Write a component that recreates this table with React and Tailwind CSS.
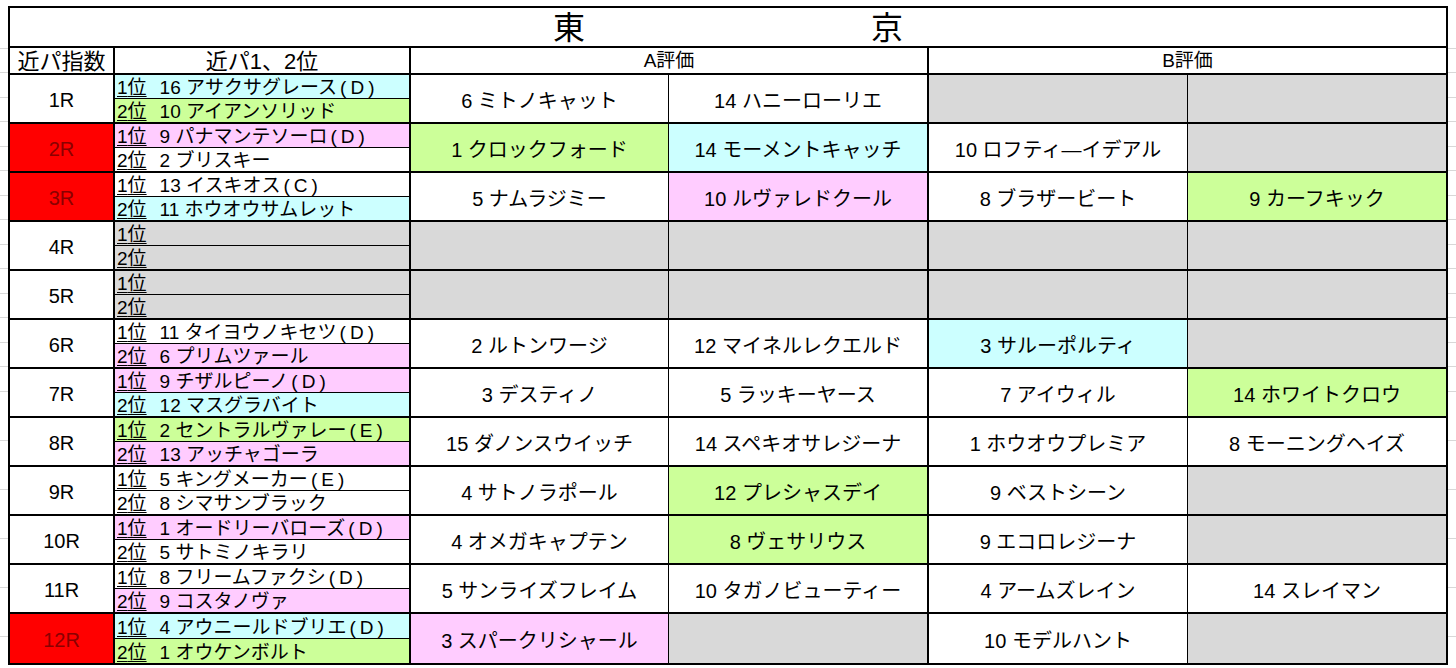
const BG = {
  w: "bg-white",
  c: "bg-[#ccffff]",
  g: "bg-[#ccff99]",
  p: "bg-[#ffccff]",
  x: "bg-[#d9d9d9]",
};

const rows = [
  { r: "1R", red: false, s1: ["c", "16 アサクサグレース", "D"], s2: ["g", "10 アイアンソリッド"], a1: ["w", "6 ミトノキャット"], a2: ["w", "14 ハニーローリエ"], b1: ["x", ""], b2: ["x", ""] },
  { r: "2R", red: true, s1: ["p", "9 パナマンテソーロ", "D"], s2: ["w", "2 ブリスキー"], a1: ["g", "1 クロックフォード"], a2: ["c", "14 モーメントキャッチ"], b1: ["w", "10 ロフティ―イデアル"], b2: ["x", ""] },
  { r: "3R", red: true, s1: ["w", "13 イスキオス", "C"], s2: ["c", "11 ホウオウサムレット"], a1: ["w", "5 ナムラジミー"], a2: ["p", "10 ルヴァレドクール"], b1: ["w", "8 ブラザービート"], b2: ["g", "9 カーフキック"] },
  { r: "4R", red: false, s1: ["x", ""], s2: ["x", ""], a1: ["x", ""], a2: ["x", ""], b1: ["x", ""], b2: ["x", ""] },
  { r: "5R", red: false, s1: ["x", ""], s2: ["x", ""], a1: ["x", ""], a2: ["x", ""], b1: ["x", ""], b2: ["x", ""] },
  { r: "6R", red: false, s1: ["w", "11 タイヨウノキセツ", "D"], s2: ["p", "6 プリムツァール"], a1: ["w", "2 ルトンワージ"], a2: ["w", "12 マイネルレクエルド"], b1: ["c", "3 サルーポルティ"], b2: ["x", ""] },
  { r: "7R", red: false, s1: ["p", "9 チザルピーノ", "D"], s2: ["c", "12 マスグラバイト"], a1: ["w", "3 デスティノ"], a2: ["w", "5 ラッキーヤース"], b1: ["w", "7 アイウィル"], b2: ["g", "14 ホワイトクロウ"] },
  { r: "8R", red: false, s1: ["g", "2 セントラルヴァレー", "E"], s2: ["p", "13 アッチャゴーラ"], a1: ["w", "15 ダノンスウイッチ"], a2: ["w", "14 スペキオサレジーナ"], b1: ["w", "1 ホウオウプレミア"], b2: ["w", "8 モーニングヘイズ"] },
  { r: "9R", red: false, s1: ["w", "5 キングメーカー", "E"], s2: ["w", "8 シマサンブラック"], a1: ["w", "4 サトノラポール"], a2: ["g", "12 プレシャスデイ"], b1: ["w", "9 ベストシーン"], b2: ["x", ""] },
  { r: "10R", red: false, s1: ["p", "1 オードリーバローズ", "D"], s2: ["w", "5 サトミノキラリ"], a1: ["w", "4 オメガキャプテン"], a2: ["g", "8 ヴェサリウス"], b1: ["w", "9 エコロレジーナ"], b2: ["x", ""] },
  { r: "11R", red: false, s1: ["w", "8 フリームファクシ", "D"], s2: ["p", "9 コスタノヴァ"], a1: ["w", "5 サンライズフレイム"], a2: ["w", "10 タガノビューティー"], b1: ["w", "4 アームズレイン"], b2: ["w", "14 スレイマン"] },
  { r: "12R", red: true, s1: ["c", "4 アウニールドブリエ", "D"], s2: ["g", "1 オウケンボルト"], a1: ["p", "3 スパークリシャール"], a2: ["x", ""], b1: ["w", "10 モデルハント"], b2: ["x", ""] },
];

function Pick({ rank, cell, first }) {
  return (
    <div className={`flex-1 flex items-center pl-[2px] pt-[2px] text-[19px] leading-none whitespace-pre ${BG[cell[0]]} ${first ? "border-b border-black" : ""}`}>
      <span className="underline underline-offset-[2px]">{rank}位</span>
      {cell[1] ? <span className="ml-[13px]">{cell[1]}</span> : null}
      {cell[2] ? (
        <span className="ml-[3px]">
          (<span className="mx-[4px]">{cell[2]}</span>)
        </span>
      ) : null}
    </div>
  );
}

function Horse({ cell, className }) {
  return (
    <div className={`flex items-center justify-center pt-[4px] text-[20px] ${BG[cell[0]]} ${className}`}>
      {cell[1]}
    </div>
  );
}

export default function App() {
  return (
    <div className="min-h-[668px] w-[1456px] bg-white bg-[image:repeating-linear-gradient(to_bottom,transparent_0,transparent_23.5px,#d8d8d8_23.5px,#d8d8d8_24.5px)] pt-[6px] pl-[8px] text-black font-['Liberation_Sans','Noto_Sans_CJK_JP',sans-serif]">
      <div className="w-[1440px] border-2 border-black bg-white">
        <div className="h-[40px] border-b-2 border-black flex items-center justify-center gap-[286px] pt-[2px] text-[32px] leading-none">
          <span>東</span>
          <span>京</span>
        </div>
        <div className="h-[27px] border-b-2 border-black flex">
          <div className="w-[105px] border-r-2 border-black flex items-center justify-center pt-[2px] text-[22px]">近パ指数</div>
          <div className="w-[296px] border-r-2 border-black flex items-center justify-center pt-[2px] text-[22px]">近パ1、2位</div>
          <div className="w-[518px] border-r-2 border-black flex items-center justify-center pt-[2px] text-[19px]">A評価</div>
          <div className="flex-1 flex items-center justify-center pt-[2px] text-[19px]">B評価</div>
        </div>
        {rows.map((row, i) => (
          <div key={row.r} className={`h-[49px] flex ${i < rows.length - 1 ? "border-b-2 border-black" : ""}`}>
            <div className={`w-[105px] border-r-2 border-black flex items-center justify-center pt-[3px] text-[20px] ${row.red ? "bg-[#ff0000] text-[#8a0000]" : "bg-white"}`}>
              {row.r}
            </div>
            <div className="w-[296px] border-r-2 border-black flex flex-col">
              <Pick rank="1" cell={row.s1} first />
              <Pick rank="2" cell={row.s2} />
            </div>
            <Horse cell={row.a1} className="w-[258px] border-r border-black" />
            <Horse cell={row.a2} className="w-[260px] border-r-2 border-black" />
            <Horse cell={row.b1} className="w-[259px] border-r border-black" />
            <Horse cell={row.b2} className="flex-1" />
          </div>
        ))}
      </div>
    </div>
  );
}
